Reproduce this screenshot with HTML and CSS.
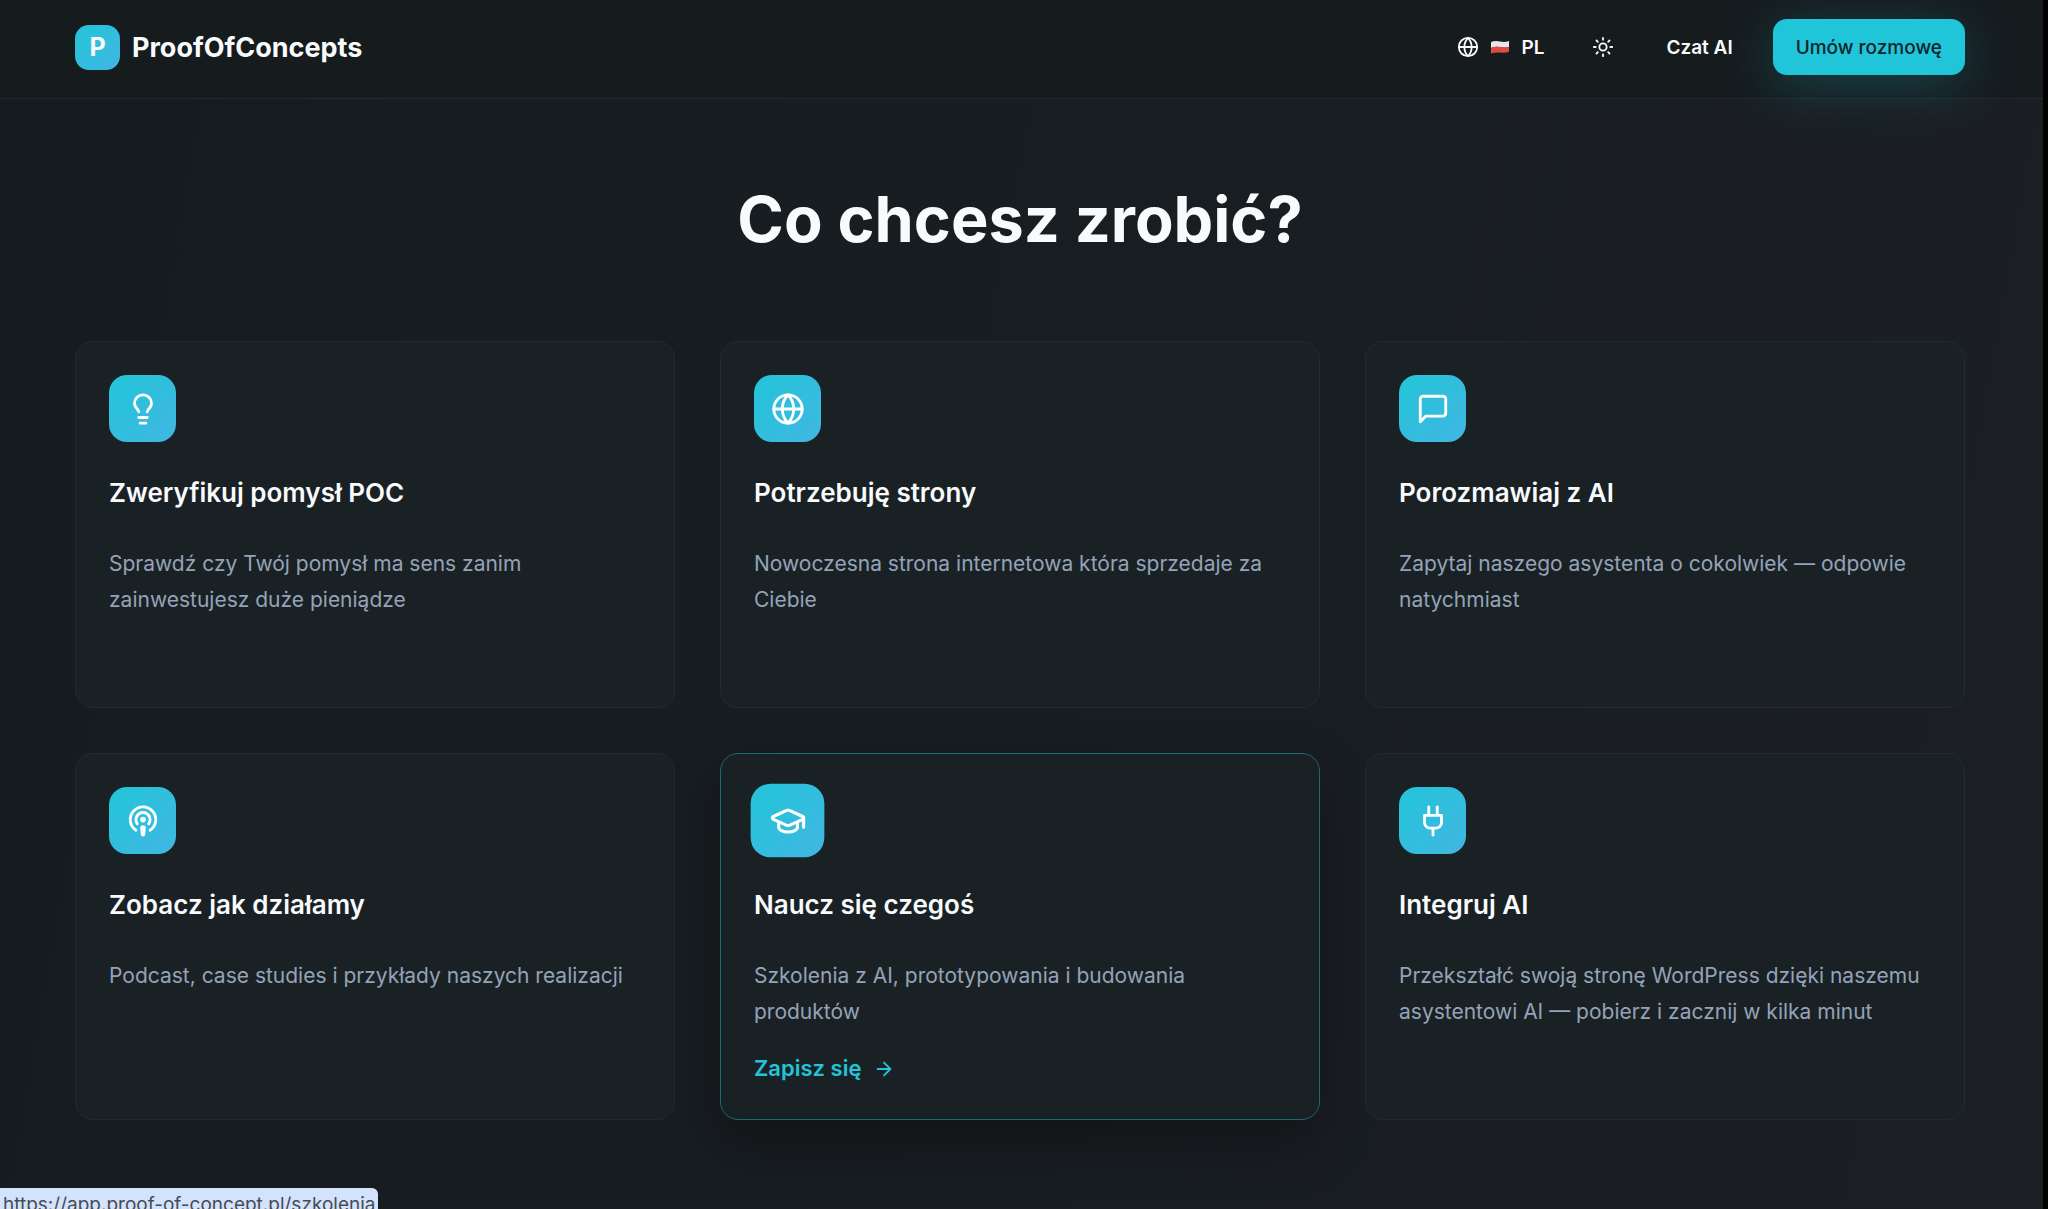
FILE: index.html
```html
<!DOCTYPE html>
<html lang="pl">
<head>
  <meta charset="utf-8">
  <meta name="viewport" content="width=device-width, initial-scale=1">
  <title>ProofOfConcepts</title>
  <link rel="stylesheet" href="styles.css">
</head>
<body>
  <header class="header">
    <a class="brand" href="#"><span class="brand-mark">P</span><span>ProofOfConcepts</span></a>
    <nav class="nav">
      <button class="nav-button" type="button">
        <svg class="icon-small" viewBox="0 0 24 24"><circle cx="12" cy="12" r="10"/><path d="M12 2a14.5 14.5 0 0 0 0 20 14.5 14.5 0 0 0 0-20M2 12h20"/></svg>
        <svg class="flag" viewBox="0 0 18 14"><path class="flag-white" d="M0 2Q4 0.500 9 1.500T18 1V7Q14 8 9 7T0 8Z"/><path class="flag-red" d="M0 8Q4 6 9 7T18 7V12Q14 13 9 12.500T0 13.500Z"/></svg>
        <span>PL</span>
      </button>
      <button class="nav-button" type="button" aria-label="Motyw">
        <svg class="icon-small" viewBox="0 0 24 24"><circle cx="12" cy="12" r="4"/><path d="M12 2v2M12 20v2M4.930 4.930l1.410 1.410M17.660 17.660l1.410 1.410M2 12h2M20 12h2M6.340 17.660l-1.410 1.410M19.070 4.930l-1.410 1.410"/></svg>
      </button>
      <a class="nav-button nav-link" href="#">Czat AI</a>
      <button class="cta" type="button">Umów rozmowę</button>
    </nav>
  </header>
  <main class="main">
    <h1 class="title">Co chcesz zrobić?</h1>
    <div class="grid">
      <article class="card">
        <div class="tile"><svg class="icon" viewBox="0 0 24 24"><path d="M15 14c.2-1 .7-1.700 1.500-2.500 1-.9 1.500-2.200 1.500-3.500A6 6 0 0 0 6 8c0 1 .2 2.200 1.500 3.500.7.7 1.300 1.500 1.500 2.500M9 18h6M10 22h4"/></svg></div>
        <h2 class="card-title">Zweryfikuj pomysł POC</h2>
        <p class="card-text">Sprawdź czy Twój pomysł ma sens zanim zainwestujesz duże pieniądze</p>
      </article>
      <article class="card">
        <div class="tile"><svg class="icon" viewBox="0 0 24 24"><circle cx="12" cy="12" r="10"/><path d="M12 2a14.5 14.5 0 0 0 0 20 14.5 14.5 0 0 0 0-20M2 12h20"/></svg></div>
        <h2 class="card-title">Potrzebuję strony</h2>
        <p class="card-text">Nowoczesna strona internetowa która sprzedaje za Ciebie</p>
      </article>
      <article class="card">
        <div class="tile"><svg class="icon" viewBox="0 0 24 24"><path d="M21 15a2 2 0 0 1-2 2H7l-4 4V5a2 2 0 0 1 2-2h14a2 2 0 0 1 2 2z"/></svg></div>
        <h2 class="card-title">Porozmawiaj z AI</h2>
        <p class="card-text">Zapytaj naszego asystenta o cokolwiek — odpowie natychmiast</p>
      </article>
      <article class="card">
        <div class="tile"><svg class="icon" viewBox="0 0 24 24"><circle cx="12" cy="11" r="1"/><path d="M11 17a1 1 0 0 1 2 0c0 .5-.34 3-.5 4.500a.5.5 0 0 1-1 0c-.16-1.500-.5-4-.5-4.500ZM8 14a5 5 0 1 1 8 0M17 18.500a9 9 0 1 0-10 0"/></svg></div>
        <h2 class="card-title">Zobacz jak działamy</h2>
        <p class="card-text">Podcast, case studies i przykłady naszych realizacji</p>
      </article>
      <article class="card card-active">
        <div class="tile"><svg class="icon" viewBox="0 0 24 24"><path d="M21.420 10.922a1 1 0 0 0-.019-1.838L12.830 5.180a2 2 0 0 0-1.660 0L2.600 9.080a1 1 0 0 0 0 1.832l8.570 3.908a2 2 0 0 0 1.660 0zM22 10v6M6 12.500V16a6 3 0 0 0 12 0v-3.500"/></svg></div>
        <h2 class="card-title">Naucz się czegoś</h2>
        <p class="card-text">Szkolenia z AI, prototypowania i budowania produktów</p>
        <a class="card-link" href="#">Zapisz się <svg class="icon-small" viewBox="0 0 24 24"><path d="M5 12h14M12 5l7 7-7 7"/></svg></a>
      </article>
      <article class="card">
        <div class="tile"><svg class="icon" viewBox="0 0 24 24"><path d="M12 22v-5M9 8V2M15 8V2M18 8v5a4 4 0 0 1-4 4h-4a4 4 0 0 1-4-4V8Z"/></svg></div>
        <h2 class="card-title">Integruj AI</h2>
        <p class="card-text">Przekształć swoją stronę WordPress dzięki naszemu asystentowi AI — pobierz i zacznij w kilka minut</p>
      </article>
    </div>
  </main>
  <div class="status">https://app.proof-of-concept.pl/szkolenia</div>
</body>
</html>
```
FILE: styles.css
```css
* { box-sizing: border-box; }

html { background: #000; }

body {
  margin: 0 5px 0 0;
  min-height: 100vh;
  background: linear-gradient(100deg, #151b1f 0%, #181d21 45%, #1b1f24 100%);
  color: #f8fafc;
  font-family: Inter, "Liberation Sans", sans-serif;
}

a { color: inherit; text-decoration: none; }

button {
  border: 0;
  background: none;
  color: inherit;
  font: inherit;
  cursor: pointer;
}

svg {
  fill: none;
  stroke: currentColor;
  stroke-width: 2;
  stroke-linecap: round;
  stroke-linejoin: round;
}

.header {
  display: flex;
  align-items: center;
  justify-content: space-between;
  padding: 19px 78px 23px 75px;
  background: #161b1e;
  border-bottom: 1px solid #20292d;
}

.brand {
  display: flex;
  align-items: center;
  gap: 12px;
  font-size: 27px;
  font-weight: 700;
}

.brand-mark {
  display: grid;
  place-items: center;
  width: 45px;
  height: 45px;
  border-radius: 14px;
  background: linear-gradient(135deg, #22c5d9, #41b6e2);
  font-size: 25px;
}

.nav { display: flex; align-items: center; }

.nav-button {
  display: flex;
  align-items: center;
  gap: 12px;
  padding: 0 24px;
  font-size: 19px;
  font-weight: 600;
}

.nav-link { padding: 0 28px; }

.icon-small { width: 22px; height: 22px; }

.flag { width: 18px; height: 14px; stroke: none; }
.flag-white { fill: #e8e6e6; }
.flag-red { fill: #e04a40; }

.cta {
  height: 56px;
  margin-left: 12px;
  padding: 0 23px;
  border-radius: 14px;
  background: #21c5d9;
  box-shadow: 0 9px 56px rgb(33 197 217 / 25%);
  color: #0d2429;
  font-size: 19px;
  font-weight: 500;
}

.main { padding: 72px 78px 89px 75px; }

.title {
  margin: 0 0 74px;
  font-size: 63px;
  font-weight: 700;
  line-height: 96px;
  text-align: center;
}

.grid {
  display: grid;
  grid-template-columns: repeat(3, 1fr);
  grid-auto-rows: 1fr;
  gap: 45px;
}

.card {
  padding: 33px;
  border: 1px solid #222b2e;
  border-radius: 18px;
  background: #1a2124;
}

.card-active {
  border-color: #1e6a72;
  box-shadow: 0 24px 56px rgb(0 0 0 / 30%);
}

.tile {
  display: grid;
  place-items: center;
  width: 67px;
  height: 67px;
  border-radius: 18px;
  background: linear-gradient(135deg, #22c5d9, #41b6e2);
  color: #fff;
}

.card-active .tile { transform: scale(1.1); }

.icon { width: 34px; height: 34px; }

.card-title {
  margin: 33px 0 35px;
  font-size: 26px;
  font-weight: 600;
  line-height: 36px;
}

.card-text {
  margin: 0;
  color: #94a3b8;
  font-size: 21px;
  line-height: 36px;
}

.card-link {
  display: flex;
  align-items: center;
  gap: 12px;
  margin-top: 21px;
  color: #21c5d9;
  font-size: 22px;
  font-weight: 600;
  line-height: 35px;
}

.status {
  position: fixed;
  bottom: 0;
  left: 0;
  height: 21px;
  padding: 0 3px;
  overflow: hidden;
  border-radius: 0 6px 0 0;
  background: #d3e3fd;
  color: #474b52;
  font-size: 19px;
  line-height: 34px;
}
```
